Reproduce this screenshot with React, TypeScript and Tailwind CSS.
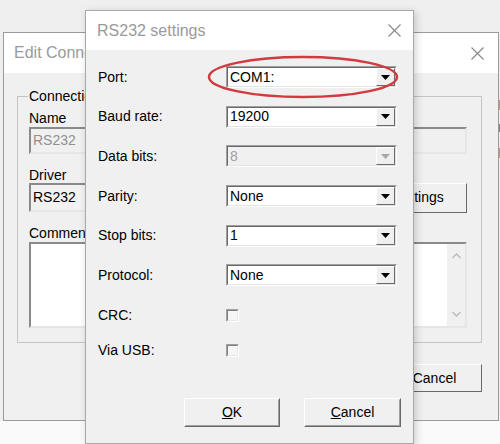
import React from "react";

const font = "font-['Liberation_Sans',Arial,sans-serif]";

function Arrow({ disabled }: { disabled?: boolean }) {
  return (
    <svg width="9" height="5" viewBox="0 0 9 5">
      <path d="M0 0H9L4.5 5Z" fill={disabled ? "#a8a8a8" : "#000"} />
    </svg>
  );
}

function Combo({ value, disabled }: { value: string; disabled?: boolean }) {
  return (
    <div className="h-[22px] w-[171px] border border-t-[#a0a0a0] border-l-[#a0a0a0] border-b-white border-r-white">
      <div
        className={
          disabled
            ? "flex h-full border border-t-[#696969] border-l-[#696969] border-b-[#e3e3e3] border-r-[#e3e3e3] bg-[#f0f0f0]"
            : "flex h-full border border-t-[#696969] border-l-[#696969] border-b-[#e3e3e3] border-r-[#e3e3e3] bg-white"
        }
      >
        <div
          className={
            disabled
              ? "flex flex-1 items-center pl-[2px] text-[14px] text-[#a0a0a0]"
              : "flex flex-1 items-center pl-[2px] text-[14px] text-black"
          }
        >
          {value}
        </div>
        <div className="flex w-[19px] items-center justify-center border border-t-white border-l-white border-b-[#696969] border-r-[#696969] bg-[#f0f0f0]">
          <Arrow disabled={disabled} />
        </div>
      </div>
    </div>
  );
}

function Check() {
  return (
    <div className="h-[13px] w-[13px] border border-t-[#a0a0a0] border-l-[#a0a0a0] border-b-white border-r-white">
      <div className="h-full w-full border border-t-[#808080] border-l-[#808080] border-b-[#e8e8e8] border-r-[#e8e8e8] bg-[#f6f6f6]" />
    </div>
  );
}

function Button({ children, w }: { children: React.ReactNode; w: string }) {
  return (
    <div className={`h-[29px] ${w} border border-t-white border-l-white border-b-[#696969] border-r-[#696969] bg-[#f0f0f0]`}>
      <div className="flex h-full items-center justify-center border border-t-[#f0f0f0] border-l-[#f0f0f0] border-b-[#a0a0a0] border-r-[#a0a0a0] text-[14px] text-black">
        {children}
      </div>
    </div>
  );
}

function CloseX() {
  return (
    <svg width="13" height="13" viewBox="0 0 13 13">
      <path d="M0.5 0.5L12.5 12.5M12.5 0.5L0.5 12.5" stroke="#8a8a8a" strokeWidth="1.2" />
    </svg>
  );
}

function Row({ label, children }: { label: string; children: React.ReactNode }) {
  return (
    <div className="flex h-[22px] items-center">
      <div className="w-[128px] text-[14px] text-black">{label}</div>
      {children}
    </div>
  );
}

export default function App() {
  return (
    <div className={`relative h-[444px] w-[500px] overflow-hidden bg-[#efefef] ${font}`}>
      {/* bottom desktop strip */}
      <div className="absolute bottom-0 left-0 h-[23px] w-full bg-[#fafafa]" />
      {/* bits of another window at far right */}
      <div className="absolute left-[498px] top-[100px] h-[10px] w-[2px] bg-[#c89a5a]" />
      <div className="absolute left-[498px] top-[124px] h-[8px] w-[2px] bg-[#6f8aa8]" />
      <div className="absolute left-[498px] top-[148px] h-[10px] w-[2px] bg-[#c89a5a]" />

      {/* Back window: Edit Connection */}
      <div className="absolute left-[3px] top-[32px] flex h-[389px] w-[496px] flex-col border border-[#9a9a9a] bg-[#f0f0f0]">
        <div className="flex h-[40px] items-center justify-between bg-white pl-[10px] pr-[14px]">
          <span className="text-[16px] text-[#9a9a9a]">Edit Connection</span>
          <CloseX />
        </div>
        <div className="flex flex-col">
          <div className="relative ml-[13px] mt-[23px] h-[247px] w-[465px] border border-[#c4c4c4]">
            <span className="absolute left-[10px] top-[-9px] bg-[#f0f0f0] px-[1px] text-[14px] leading-[16px] text-black">
              Connection
            </span>
            <div className="flex flex-col pl-[11px] pt-[13px]">
              <div className="text-[14px] leading-[16px] text-black">Name</div>
              <div className="mt-[1px] flex h-[27px] w-[438px] items-center border-2 border-t-[#8a8a8a] border-l-[#8a8a8a] border-b-[#e6e6e6] border-r-[#e6e6e6] bg-[#f0f0f0] pl-[2px] text-[14px] text-[#909090]">
                RS232
              </div>
              <div className="mt-[14px] text-[14px] leading-[15px] text-black">Driver</div>
              <div className="mt-0 flex h-[29px] w-[438px] items-center justify-between">
                <div className="flex h-full w-[320px] items-center border-2 border-t-[#8a8a8a] border-l-[#8a8a8a] border-b-[#e6e6e6] border-r-[#e6e6e6] bg-[#f2f2f2] pl-[2px] text-[14px] text-black">
                  RS232
                </div>
                <div className="flex h-[30px] w-[97px] items-center justify-center border border-t-white border-l-white border-b-[#696969] border-r-[#696969] text-[14px] text-black">
                  Settings
                </div>
              </div>
              <div className="mt-[13px] text-[14px] leading-[16px] text-black">Comment</div>
              <div className="mt-[1px] flex h-[86px] w-[438px] border-2 border-t-[#8a8a8a] border-l-[#8a8a8a] border-b-[#e6e6e6] border-r-[#e6e6e6] bg-white">
                <div className="flex-1" />
                <div className="flex w-[18px] flex-col items-center justify-between bg-[#f0f0f0] py-[9px]">
                  <svg width="9" height="6" viewBox="0 0 9 6">
                    <path d="M0.5 5L4.5 1L8.5 5" stroke="#bcbcbc" strokeWidth="1.5" fill="none" />
                  </svg>
                  <svg width="9" height="6" viewBox="0 0 9 6">
                    <path d="M0.5 1L4.5 5L8.5 1" stroke="#bcbcbc" strokeWidth="1.5" fill="none" />
                  </svg>
                </div>
              </div>
            </div>
          </div>
          <div className="mr-[16px] mt-[21px] flex justify-end">
            <div className="flex h-[28px] w-[95px] items-center justify-center border border-t-white border-l-white border-b-[#696969] border-r-[#696969] text-[14px] text-black">
              Cancel
            </div>
          </div>
        </div>
      </div>

      {/* Front dialog: RS232 settings */}
      <div className="absolute left-[85px] top-[10px] flex h-[434px] w-[329px] flex-col border border-[#a8a8a8] bg-[#f0f0f0] shadow-[2px_2px_8px_rgba(0,0,0,0.18)]">
        <div className="flex h-[39px] items-center justify-between bg-white pl-[11px] pr-[12px]">
          <span className="text-[16px] text-[#9a9a9a]">RS232 settings</span>
          <CloseX />
        </div>
        <div className="flex flex-col pl-[12px] pt-[16px]">
          <div className="flex flex-col gap-[17.7px]">
            <Row label="Port:">
              <Combo value="COM1:" />
            </Row>
            <Row label="Baud rate:">
              <Combo value="19200" />
            </Row>
            <Row label="Data bits:">
              <Combo value="8" disabled />
            </Row>
            <Row label="Parity:">
              <Combo value="None" />
            </Row>
            <Row label="Stop bits:">
              <Combo value="1" />
            </Row>
            <Row label="Protocol:">
              <Combo value="None" />
            </Row>
            <Row label="CRC:">
              <Check />
            </Row>
          </div>
          <div className="mt-[13px]">
            <Row label="Via USB:">
              <Check />
            </Row>
          </div>
          <div className="mt-[37px] flex justify-end gap-[24px] pr-[12px]">
            <Button w="w-[96px]">
              <span className="underline">O</span>K
            </Button>
            <Button w="w-[97px]">
              <span className="underline">C</span>ancel
            </Button>
          </div>
        </div>
      </div>

      {/* Red annotation ellipse */}
      <svg className="pointer-events-none absolute left-0 top-0" width="500" height="444">
        <ellipse cx="303" cy="77" rx="94" ry="20" fill="none" stroke="#d23a40" strokeWidth="2.5" />
      </svg>
    </div>
  );
}
